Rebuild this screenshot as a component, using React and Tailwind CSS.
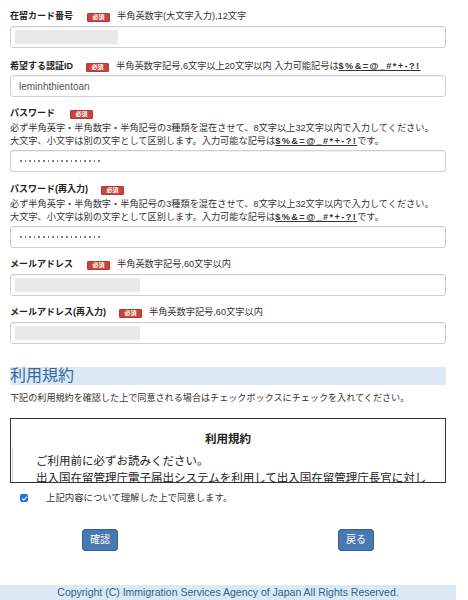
import React from "react";

const FONT = { fontFamily: '"Liberation Sans", "Noto Sans CJK JP", sans-serif' };

function Badge() {
  return (
    <span className="inline-flex items-center justify-center w-[23px] h-[9px] bg-[#c8453d] border border-[#b23a33] rounded-[1px] text-white text-[6px] font-bold leading-none">
      必須
    </span>
  );
}

function Sym() {
  return <span className="font-bold underline underline-offset-1 tracking-[1.4px]">$%&amp;=@_#*+-?!</span>;
}

function Label({ text, gap, note }) {
  return (
    <div className="flex items-center h-[12px] text-[9px] leading-[12px]">
      <span className="font-bold text-[#222]">{text}</span>
      <span className={gap}>
        <Badge />
      </span>
      {note && <span className="ml-[7px] text-[9.2px] text-[#333]">{note}</span>}
    </div>
  );
}

function Box({ children, mt = "mt-[4px]" }) {
  return (
    <div className={`${mt} h-[22px] w-full rounded-[3px] border border-[#cfcfcf] bg-white shadow-[inset_0_1px_1px_rgba(0,0,0,0.06)] flex items-center`}>
      {children}
    </div>
  );
}

function Redact({ w }) {
  return <div className={`ml-[4px] h-[14px] ${w} bg-[#e8e8e8]`} />;
}

function Dots() {
  return (
    <div className="ml-[9px] flex gap-[3px] items-center">
      {Array.from({ length: 18 }).map((_, i) => (
        <span key={i} className="block w-[1.6px] h-[1.6px] rounded-full bg-[#555]" />
      ))}
    </div>
  );
}

function PwDesc() {
  return (
    <div className="mt-[3px] text-[9.2px] leading-[13px] text-[#333]">
      <div>必ず半角英字・半角数字・半角記号の3種類を混在させて、8文字以上32文字以内で入力してください。</div>
      <div>
        大文字、小文字は別の文字として区別します。入力可能な記号は<Sym />です。
      </div>
    </div>
  );
}

export default function App() {
  return (
    <div className="w-[468px] h-[600px] overflow-hidden bg-white text-[#333]" style={FONT}>
      <div className="w-[456px] px-[10px] pt-[10px]">
        {/* Field 1 */}
        <div>
          <Label text="在留カード番号" gap="ml-[14px]" note="半角英数字(大文字入力),12文字" />
          <Box>
            <Redact w="w-[103px]" />
          </Box>
        </div>

        {/* Field 2 */}
        <div className="mt-[12px]">
          <div className="flex items-center h-[12px] text-[9px] leading-[12px]">
            <span className="font-bold text-[#222]">希望する認証ID</span>
            <span className="ml-[13px]">
              <Badge />
            </span>
            <span className="ml-[7px] text-[9.2px] text-[#333]">
              半角英数字記号,6文字以上20文字以内 入力可能記号は<Sym />
            </span>
          </div>
          <Box mt="mt-[3px]">
            <span className="ml-[8px] text-[10px] text-[#555]">leminhthientoan</span>
          </Box>
        </div>

        {/* Field 3 */}
        <div className="mt-[10px]">
          <Label text="パスワード" gap="ml-[15px]" />
          <PwDesc />
          <Box mt="mt-[2px]">
            <Dots />
          </Box>
        </div>

        {/* Field 4 */}
        <div className="mt-[11px]">
          <Label text="パスワード(再入力)" gap="ml-[13px]" />
          <PwDesc />
          <Box mt="mt-[2px]">
            <Dots />
          </Box>
        </div>

        {/* Field 5 */}
        <div className="mt-[10px]">
          <Label text="メールアドレス" gap="ml-[14px]" note="半角英数字記号,60文字以内" />
          <Box>
            <Redact w="w-[125px]" />
          </Box>
        </div>

        {/* Field 6 */}
        <div className="mt-[10px]">
          <Label text="メールアドレス(再入力)" gap="ml-[13px]" note="半角英数字記号,60文字以内" />
          <Box>
            <Redact w="w-[125px]" />
          </Box>
        </div>

        {/* Terms header */}
        <div className="mt-[23px] h-[18px] bg-[#dce9f4] flex items-center">
          <span className="text-[16px] leading-[18px] text-[#2f6a9d]">利用規約</span>
        </div>
        <div className="mt-[7px] text-[9.1px] leading-[13px] text-[#333]">
          下記の利用規約を確認した上で同意される場合はチェックボックスにチェックを入れてください。
        </div>

        {/* Terms box */}
        <div className="mt-[13px] h-[65px] border border-[#333] border-b-[1.5px] overflow-hidden flex flex-col">
          <div className="pt-[12px] text-center text-[11.5px] leading-[16px] font-bold text-[#222]">
            利用規約
          </div>
          <div className="ml-[1px] mt-[1px] flex-1 border-l border-[#d0d0d0] pl-[23px] pt-[5px] text-[11.5px] leading-[17px] text-[#222]">
            <div>ご利用前に必ずお読みください。</div>
            <div className="whitespace-nowrap">出入国在留管理庁電子届出システムを利用して出入国在留管理庁長官に対し</div>
          </div>
        </div>

        {/* Checkbox */}
        <div className="mt-[10px] h-[10px] flex items-center">
          <span className="ml-[10px] w-[8px] h-[8px] rounded-[2px] bg-[#1a6fe0] flex items-center justify-center">
            <svg viewBox="0 0 8 8" className="w-[7px] h-[7px]">
              <path d="M1.5 4.2 L3.2 5.8 L6.5 2" fill="none" stroke="white" strokeWidth="1.3" strokeLinecap="round" strokeLinejoin="round" />
            </svg>
          </span>
          <span className="ml-[18px] text-[9.4px] leading-[12px] text-[#333]">上記内容について理解した上で同意します。</span>
        </div>

        {/* Buttons */}
        <div className="mt-[26px] px-[72px] flex justify-between">
          <button className="w-[36px] h-[22px] rounded-[3px] bg-[#4a78b2] border border-[#33609a] text-white text-[10px] leading-none">
            確認
          </button>
          <button className="w-[36px] h-[22px] rounded-[3px] bg-[#4a78b2] border border-[#33609a] text-white text-[10px] leading-none">
            戻る
          </button>
        </div>
      </div>

      {/* Footer */}
      <div className="mt-[34px] w-[456px] h-[20px] bg-[#dce9f4] pt-[1px] text-center text-[10.5px] leading-[13px] text-[#2d5f8e]">
        Copyright (C) Immigration Services Agency of Japan All Rights Reserved.
      </div>
    </div>
  );
}
